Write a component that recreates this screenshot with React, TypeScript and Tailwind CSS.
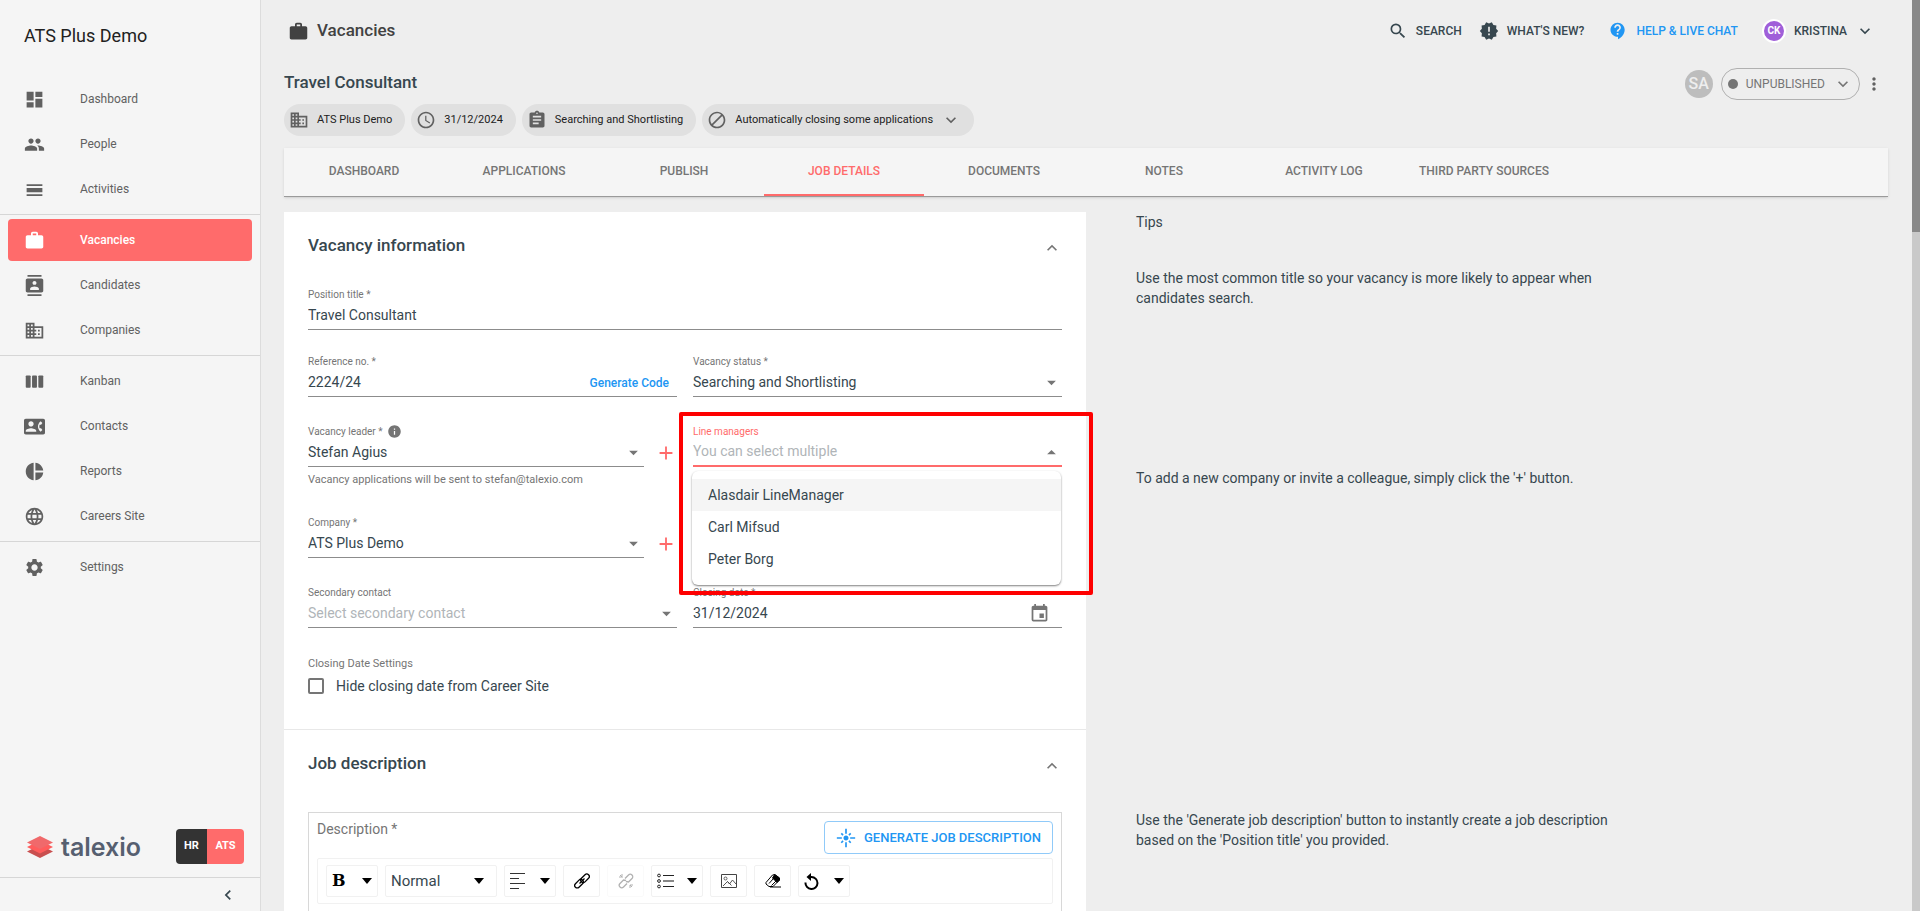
import { useState } from "react";
import type { ReactNode } from "react";
import type { IconType } from "react-icons";
import {
  MdAccessTime,
  MdAdd,
  MdArrowDropDown,
  MdArrowDropUp,
  MdAssignment,
  MdBlock,
  MdContactPhone,
  MdContacts,
  MdContactSupport,
  MdDashboard,
  MdBusiness,
  MdEvent,
  MdExpandLess,
  MdExpandMore,
  MdFlare,
  MdInfo,
  MdKeyboardArrowLeft,
  MdLanguage,
  MdMoreVert,
  MdNewReleases,
  MdPeople,
  MdPieChart,
  MdSearch,
  MdSettings,
  MdWork,
} from "react-icons/md";

function KanbanIcon({ className }: { className?: string }) {
  return (
    <svg viewBox="0 0 24 24" fill="currentColor" className={className}>
      <rect x="2" y="5" width="5.6" height="14" rx="1" />
      <rect x="9.2" y="5" width="5.6" height="14" rx="1" />
      <rect x="16.4" y="5" width="5.6" height="14" rx="1" />
    </svg>
  );
}

function ActivitiesIcon({ className }: { className?: string }) {
  return (
    <svg viewBox="0 0 24 24" fill="currentColor" className={className}>
      <path d="M3 6h18v2H3zM3 10.200h18v5H3zM3 17.400h18v2H3z" />
    </svg>
  );
}

type NavItem = { label: string; icon: IconType | typeof KanbanIcon; active?: boolean };

const navGroups: NavItem[][] = [
  [
    { label: "Dashboard", icon: MdDashboard },
    { label: "People", icon: MdPeople },
    { label: "Activities", icon: ActivitiesIcon },
  ],
  [
    { label: "Vacancies", icon: MdWork, active: true },
    { label: "Candidates", icon: MdContacts },
    { label: "Companies", icon: MdBusiness },
  ],
  [
    { label: "Kanban", icon: KanbanIcon },
    { label: "Contacts", icon: MdContactPhone },
    { label: "Reports", icon: MdPieChart },
    { label: "Careers Site", icon: MdLanguage },
  ],
  [{ label: "Settings", icon: MdSettings }],
];

const tabs = [
  "DASHBOARD",
  "APPLICATIONS",
  "PUBLISH",
  "JOB DETAILS",
  "DOCUMENTS",
  "NOTES",
  "ACTIVITY LOG",
  "THIRD PARTY SOURCES",
];

const managers = ["Alasdair LineManager", "Carl Mifsud", "Peter Borg"];

function Sidebar() {
  return (
    <aside className="flex w-[261px] shrink-0 flex-col border-r border-[#dcdcdc] bg-[#f5f5f5]">
      <div className="flex h-[78px] items-start px-6 pt-6 text-lg leading-6 text-[#212121]">ATS Plus Demo</div>
      <nav>
        {navGroups.map((group, i) => (
          <ul
            key={i}
            className={`flex flex-col gap-[3px] pb-1 ${i > 0 ? "border-t border-[#d6d6d6] pt-1" : ""}`}
          >
            {group.map(({ label, icon: Icon, active }) => (
              <li key={label} className="px-2">
                <a
                  href="#"
                  className={`flex h-[42px] items-center gap-[35px] rounded pl-4 text-xs ${
                    active ? "bg-[#ff6b6b] font-medium text-white" : "text-[#616161]"
                  }`}
                >
                  <Icon className="size-[21px]" />
                  {label}
                </a>
              </li>
            ))}
          </ul>
        ))}
      </nav>
      <div className="mt-auto flex items-center pr-4 pb-[13px] pl-[27px]">
        <svg viewBox="0 0 26 22" className="h-[22px] w-[26px]">
          <path d="M0 15.500 13 9l13 6.500L13 22z" fill="#c94f4f" />
          <path d="M0 11 13 4.500 26 11 13 17.500z" fill="#ff5c5c" />
          <path d="M0 6.500 13 0l13 6.500L13 13z" fill="#f0696b" />
        </svg>
        <span className="ml-2 font-['Inter'] text-[25px] leading-8 font-semibold text-[#565f70]">talexio</span>
        <div className="ml-auto flex h-[35px] overflow-hidden rounded text-[11px] font-bold text-white">
          <button className="w-[31px] bg-[#333]">HR</button>
          <button className="w-[37px] bg-[#ff6b6b]">ATS</button>
        </div>
      </div>
      <div className="flex h-[34px] items-center justify-end border-t border-[#d6d6d6] pr-[22px]">
        <button aria-label="Collapse menu">
          <MdKeyboardArrowLeft className="size-5 text-[#37474f]" />
        </button>
      </div>
    </aside>
  );
}

function TopBar() {
  return (
    <header className="flex h-[62px] items-center pr-[13px] pl-1">
      <MdWork className="size-[21px] text-[#424242]" />
      <h1 className="ml-2 text-[17px] font-medium text-[#424242]">Vacancies</h1>
      <div className="ml-auto flex items-center text-xs font-medium text-[#37474f]">
        <button className="flex items-center gap-2">
          <MdSearch className="size-5" />
          SEARCH
        </button>
        <button className="ml-[17px] flex items-center gap-2">
          <MdNewReleases className="size-5" />
          WHAT'S NEW?
        </button>
        <button className="ml-6 flex items-center gap-2 text-[#2196f3]">
          <MdContactSupport className="size-5" />
          HELP &amp; LIVE CHAT
        </button>
        <button className="ml-6 flex items-center">
          <span className="flex size-6 items-center justify-center rounded-full border-2 border-white bg-[#a05fd9] text-[10px] font-bold text-white">
            CK
          </span>
          <span className="ml-2">KRISTINA</span>
          <MdExpandMore className="ml-2 size-5" />
        </button>
      </div>
    </header>
  );
}

function Chip({ icon: Icon, children }: { icon: IconType; children: ReactNode }) {
  return (
    <span className="flex h-8 items-center gap-2 rounded-full bg-[#e0e0e0] pr-[13px] pl-[5px] text-[11px] text-[#212121]">
      <Icon className="size-5 text-[#616161]" />
      {children}
    </span>
  );
}

function VacancyHeader() {
  return (
    <div className="flex items-start">
      <div>
        <h2 className="mt-2 text-[17px] leading-6 font-medium text-[#37474f]">Travel Consultant</h2>
        <div className="mt-2.5 flex gap-1.5">
          <Chip icon={MdBusiness}>ATS Plus Demo</Chip>
          <Chip icon={MdAccessTime}>31/12/2024</Chip>
          <Chip icon={MdAssignment}>Searching and Shortlisting</Chip>
          <Chip icon={MdBlock}>
            Automatically closing some applications
            <button aria-label="Show closing rules">
              <MdExpandMore className="size-5 text-[#616161]" />
            </button>
          </Chip>
        </div>
      </div>
      <div className="mt-1.5 ml-auto flex items-center pr-1">
        <span className="flex size-7 items-center justify-center rounded-full bg-[#bdbdbd] text-base font-medium text-[#eee]">
          SA
        </span>
        <button className="ml-2 flex h-8 items-center rounded-full border border-[#b0b0b0] px-1.5 text-xs text-[#757575]">
          <span className="size-2.5 rounded-full bg-[#757575]" />
          <span className="mx-2">UNPUBLISHED</span>
          <MdExpandMore className="size-5" />
        </button>
        <button aria-label="More actions" className="ml-1">
          <MdMoreVert className="size-5 text-[#616161]" />
        </button>
      </div>
    </div>
  );
}

function Tabs() {
  const [current, setCurrent] = useState("JOB DETAILS");

  return (
    <div role="tablist" className="mt-3 flex h-[49px] border-b border-[#9a9a9a] bg-[#f5f5f5] shadow-sm">
      {tabs.map((tab) => (
        <button
          key={tab}
          role="tab"
          aria-selected={tab === current}
          onClick={() => setCurrent(tab)}
          className={`w-40 border-b-2 py-3 text-xs font-medium whitespace-nowrap ${
            tab === current ? "border-[#ff6b6b] text-[#ff6b6b]" : "border-transparent text-[#757575]"
          }`}
        >
          {tab}
        </button>
      ))}
    </div>
  );
}

interface FieldProps {
  id: string;
  label: string;
  labelIcon?: ReactNode;
  end?: ReactNode;
  focused?: boolean;
  children: ReactNode;
}

function Field({ id, label, labelIcon, end, focused, children }: FieldProps) {
  return (
    <div className="min-w-0 flex-1">
      <div className="flex h-4 items-center gap-1">
        <label htmlFor={id} className={`text-[10px] ${focused ? "text-[#ff6b6b]" : "text-[#757575]"}`}>
          {label}
        </label>
        {labelIcon}
      </div>
      <div
        className={`flex h-7 items-center text-sm text-[#37474f] ${
          focused ? "border-b-2 border-[#ff6b6b]" : "border-b border-[#8c8c8c]"
        }`}
      >
        {children}
        {end}
      </div>
    </div>
  );
}

const control = "h-full min-w-0 flex-1 appearance-none bg-transparent pb-0.5 outline-none";

interface SelectFieldProps {
  id: string;
  label: string;
  value: string;
  labelIcon?: ReactNode;
  muted?: boolean;
}

function SelectField({ id, label, value, labelIcon, muted }: SelectFieldProps) {
  return (
    <Field
      id={id}
      label={label}
      labelIcon={labelIcon}
      end={<MdArrowDropDown className="pointer-events-none size-[21px] text-[#757575]" />}
    >
      <select id={id} className={`${control} ${muted ? "text-[#b0b5b8]" : ""}`}>
        <option>{value}</option>
      </select>
    </Field>
  );
}

function AddButton({ label }: { label: string }) {
  return (
    <button aria-label={label} className="flex h-7 w-[33px] items-center justify-end self-end">
      <MdAdd className="size-[22px] text-[#ff6b6b]" />
    </button>
  );
}

function SectionHeader({ title }: { title: string }) {
  return (
    <div className="flex h-[68px] items-center justify-between">
      <h3 className="text-[17px] font-medium text-[#37474f]">{title}</h3>
      <button aria-label={`Collapse ${title}`} className="mt-1">
        <MdExpandLess className="size-5 text-[#757575]" />
      </button>
    </div>
  );
}

function LineManagers() {
  return (
    <div className="relative flex min-w-0">
      <Field
        id="managers"
        label="Line managers"
        focused
        end={<MdArrowDropUp className="size-[21px] text-[#757575]" />}
      >
        <input
          id="managers"
          role="combobox"
          aria-expanded="true"
          aria-controls="managers-list"
          placeholder="You can select multiple"
          className={`${control} placeholder:text-[#b0b5b8]`}
        />
      </Field>
      <ul
        id="managers-list"
        role="listbox"
        className="absolute top-12 right-px -left-px z-10 rounded-md bg-white pt-2 pb-2.5 text-sm text-[#37474f] shadow-[0_1px_2px_rgba(0,0,0,0.5)]"
      >
        {managers.map((name, i) => (
          <li
            key={name}
            role="option"
            aria-selected={false}
            className={`flex h-8 items-center px-4 ${i === 0 ? "bg-[#f5f5f5]" : ""}`}
          >
            {name}
          </li>
        ))}
      </ul>
      {/* callout frame */}
      <div className="pointer-events-none absolute -top-[11px] -right-[31px] -left-[14px] z-20 h-[183px] rounded-xs border-4 border-[#fe0000]" />
    </div>
  );
}

function VacancyInformation() {
  return (
    <section className="border-b border-[#e8e8e8] px-6 pb-[33px]">
      <SectionHeader title="Vacancy information" />
      <div className="mt-1.5 flex">
        <Field id="title" label="Position title *">
          <input id="title" defaultValue="Travel Consultant" className={control} />
        </Field>
      </div>
      <div className="mt-[23px] grid grid-cols-2 gap-x-4">
        <Field
          id="reference"
          label="Reference no. *"
          end={<button className="pr-2 text-xs font-medium text-[#2196f3]">Generate Code</button>}
        >
          <input id="reference" defaultValue="2224/24" className={control} />
        </Field>
        <SelectField id="status" label="Vacancy status *" value="Searching and Shortlisting" />
      </div>
      <div className="mt-[26px] grid grid-cols-2 gap-x-4">
        <div>
          <div className="flex">
            <SelectField
              id="leader"
              label="Vacancy leader *"
              value="Stefan Agius"
              labelIcon={<MdInfo className="size-[15px] text-[#757575]" />}
            />
            <AddButton label="Add vacancy leader" />
          </div>
          <p className="mt-[5px] text-[11px] leading-4 text-[#757575]">
            Vacancy applications will be sent to stefan@talexio.com
          </p>
        </div>
        <LineManagers />
      </div>
      <div className="mt-[26px] grid grid-cols-2 gap-x-4">
        <div className="flex">
          <SelectField id="company" label="Company *" value="ATS Plus Demo" />
          <AddButton label="Add company" />
        </div>
      </div>
      <div className="mt-[26px] grid grid-cols-2 gap-x-4">
        <SelectField id="contact" label="Secondary contact" value="Select secondary contact" muted />
        <Field
          id="closing"
          label="Closing date *"
          end={
            <button aria-label="Pick a date" className="mr-3">
              <MdEvent className="size-[21px] text-[#757575]" />
            </button>
          }
        >
          <input id="closing" defaultValue="31/12/2024" className={control} />
        </Field>
      </div>
      <p className="mt-7 text-[11px] leading-4 text-[#757575]">Closing Date Settings</p>
      <label className="mt-1 flex h-5 items-center gap-3 text-sm text-[#37474f]">
        <input type="checkbox" className="size-4 appearance-none rounded-xs border-2 border-[#757575]" />
        Hide closing date from Career Site
      </label>
    </section>
  );
}

function Caret() {
  return (
    <svg viewBox="0 0 10 6" className="h-1.5 w-2.5 shrink-0">
      <path d="M0 0h10L5 6z" />
    </svg>
  );
}

interface ToolButtonProps {
  label: string;
  caret?: boolean;
  faded?: boolean;
  children: ReactNode;
}

function ToolButton({ label, caret, faded, children }: ToolButtonProps) {
  return (
    <button
      aria-label={label}
      className={`flex h-8 items-center rounded-xs border border-[#f1f1f1] ${
        caret ? "w-[52px] justify-between px-[5px]" : "w-[37px] justify-center"
      } ${faded ? "opacity-30" : ""}`}
    >
      {children}
      {caret && <Caret />}
    </button>
  );
}

function Toolbar() {
  return (
    <div className="mt-1 flex items-center gap-[7px] rounded-xs border border-[#f1f1f1] px-2 py-1.5 text-black">
      <ToolButton label="Bold" caret>
        <span className="font-['DejaVu_Serif'] text-base font-bold">B</span>
      </ToolButton>
      <button className="flex h-8 w-28 items-center justify-between rounded-xs border border-[#f1f1f1] pr-3 pl-[5px] text-[15px] text-[#37474f]">
        Normal
        <span className="text-black">
          <Caret />
        </span>
      </button>
      <ToolButton label="Align" caret>
        <svg viewBox="0 0 16 16" className="size-4" stroke="#333" fill="none">
          <path d="M0 .5h15M0 5.500h9M0 10.500h15M0 15.500h9" />
        </svg>
      </ToolButton>
      <ToolButton label="Link">
        <svg viewBox="0 0 16 16" className="size-4" stroke="#000" strokeWidth="1.300" fill="none">
          <rect x="6" y="2.800" width="10" height="5" rx="2.500" transform="rotate(-45 11 5.300)" />
          <rect x="0" y="8.200" width="10" height="5" rx="2.500" transform="rotate(-45 5 10.700)" />
          <path d="M5.500 10.500l5-5" />
        </svg>
      </ToolButton>
      <ToolButton label="Unlink" faded>
        <svg viewBox="0 0 16 16" className="size-4" stroke="#000" strokeWidth="1.300" fill="none">
          <path d="M7 5.500l3.500-3.500a2.400 2.400 0 0 1 3.500 3.500L10.500 9l-2.500-.5M9 10.500L5.500 14A2.400 2.400 0 0 1 2 10.500L5.500 7l2.500.5" />
          <path d="M4 1v3M1 4h3M2 2l2.500 2.500M12 12v3M12 12h3M12 12l2 2" strokeWidth="1" />
        </svg>
      </ToolButton>
      <ToolButton label="List" caret>
        <svg viewBox="0 0 17 16" className="h-4 w-[17px]" stroke="#222" fill="none">
          <circle cx="2" cy="2.500" r="1.400" />
          <circle cx="2" cy="8" r="1.400" />
          <circle cx="2" cy="13.500" r="1.400" />
          <path d="M6 2.500h11M6 13.500h11" />
          <path d="M6 8h11" stroke="#888" strokeWidth="2" />
        </svg>
      </ToolButton>
      <ToolButton label="Image">
        <svg viewBox="0 0 16 16" className="size-4" stroke="#444" fill="none">
          <path d="M.5 1.500h15v13H.5z" />
          <circle cx="4.500" cy="5.500" r="1.500" strokeWidth=".8" />
          <path d="M2 13l4.500-4.500L8.500 11l3-4 3.500 4M6.500 8.500l4 4" strokeWidth=".9" />
        </svg>
      </ToolButton>
      <ToolButton label="Remove formatting">
        <svg viewBox="0 0 16 16" className="size-4" stroke="#000" fill="none">
          <path d="M1 9.500L7.500 2 10 1.500 14.500 5v2L8 13.500H4L1 11z" />
          <path d="M7.500 5l2-3.200L14.500 5v2L12 9.500z" fill="#000" />
          <path d="M4 10.500L8.500 5.500M6.500 12.500L11 8M5 14h11" />
        </svg>
      </ToolButton>
      <ToolButton label="Undo" caret>
        <svg viewBox="0 0 16 17" className="h-[17px] w-4" fill="none" stroke="#000" strokeWidth="2">
          <path d="M1.500 9.500A6 6 0 1 0 7.500 4H5" />
          <path d="M7 0v8L2.500 4z" fill="#000" stroke="none" />
        </svg>
      </ToolButton>
    </div>
  );
}

function JobDescription() {
  return (
    <section className="px-6">
      <SectionHeader title="Job description" />
      <div className="mt-3.5 h-80 border border-[#d8d8d8] p-2">
        <div className="flex items-start justify-between">
          <span className="text-sm leading-4 text-[#757575]">Description *</span>
          <button className="flex h-[33px] items-center gap-2 rounded border border-[#90caf9] px-[11px] text-[13px] font-medium text-[#2196f3]">
            <MdFlare className="size-5" />
            GENERATE JOB DESCRIPTION
          </button>
        </div>
        <Toolbar />
      </div>
    </section>
  );
}

function Tips() {
  return (
    <div className="flex-1 pl-[50px] text-sm leading-5 text-[#37474f]">
      <div className="max-w-[490px]">
        <p>Tips</p>
        <p className="mt-9">
          Use the most common title so your vacancy is more likely to appear when candidates search.
        </p>
        <p className="mt-40">To add a new company or invite a colleague, simply click the '+' button.</p>
        <p className="mt-[322px]">
          Use the 'Generate job description' button to instantly create a job description based on the 'Position title'
          you provided.
        </p>
      </div>
    </div>
  );
}

export default function App() {
  return (
    <div className="flex h-screen overflow-hidden bg-[#eee] font-['Roboto',sans-serif]">
      <Sidebar />
      <main className="min-w-0 flex-1 pr-6 pl-[23px]">
        <TopBar />
        <VacancyHeader />
        <Tabs />
        <div className="mt-[15px] flex">
          <div className="w-1/2 bg-white">
            <VacancyInformation />
            <JobDescription />
          </div>
          <Tips />
        </div>
      </main>
      <div className="w-2 shrink-0 bg-[#c9c9c9]">
        <div className="h-[232px] bg-[#888]" />
      </div>
    </div>
  );
}
